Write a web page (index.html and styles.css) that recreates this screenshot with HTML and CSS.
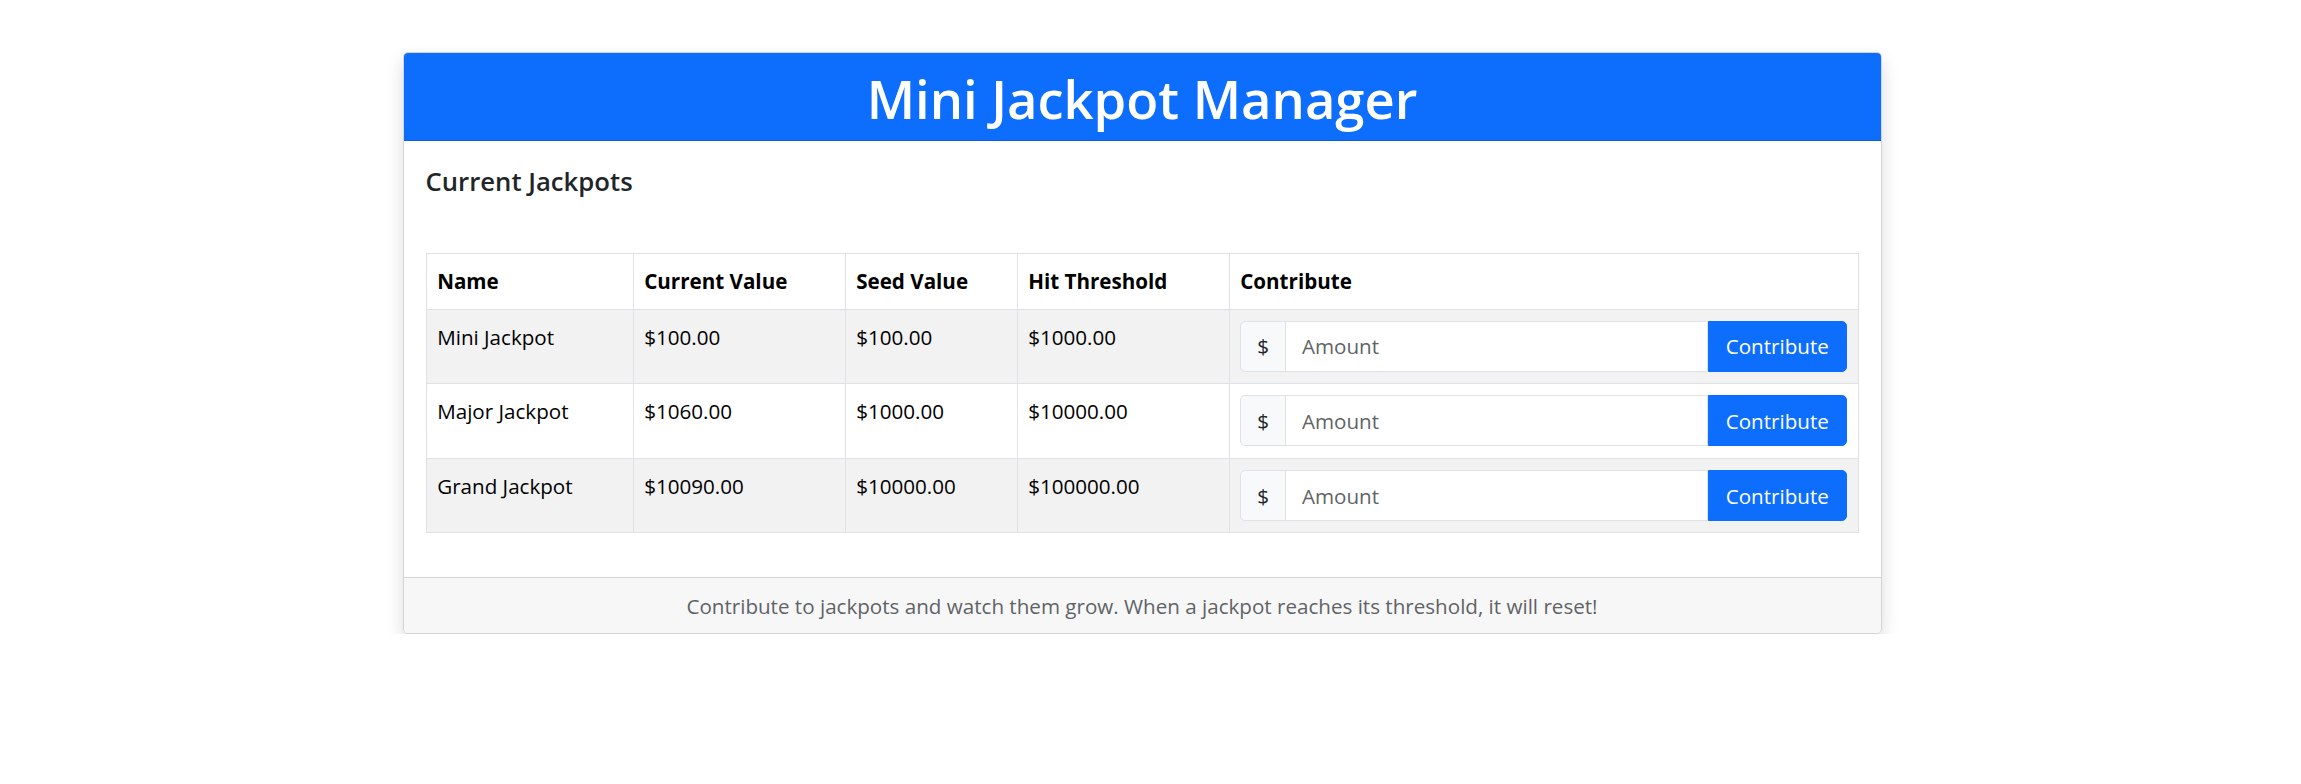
FILE: index.html
```html
<!DOCTYPE html>
<html lang="en">
<head>
<meta charset="utf-8">
<title>Mini Jackpot Manager</title>
<link rel="stylesheet" href="styles.css">
</head>
<body>
<div class="page">
  <div class="card">
    <div class="card-header">
      <h1 class="title">Mini Jackpot Manager</h1>
    </div>
    <div class="card-body">
      <h5 class="section-title">Current Jackpots</h5>
      <table class="jp-table">
        <colgroup>
          <col class="c-name">
          <col class="c-current">
          <col class="c-seed">
          <col class="c-hit">
          <col class="c-contrib">
        </colgroup>
        <thead>
          <tr>
            <th>Name</th>
            <th>Current Value</th>
            <th>Seed Value</th>
            <th>Hit Threshold</th>
            <th>Contribute</th>
          </tr>
        </thead>
        <tbody>
          <tr>
            <td>Mini Jackpot</td>
            <td>$100.00</td>
            <td>$100.00</td>
            <td>$1000.00</td>
            <td>
              <div class="input-group">
                <span class="addon">$</span>
                <input class="amount" type="text" placeholder="Amount">
                <button class="btn" type="button">Contribute</button>
              </div>
            </td>
          </tr>
          <tr>
            <td>Major Jackpot</td>
            <td>$1060.00</td>
            <td>$1000.00</td>
            <td>$10000.00</td>
            <td>
              <div class="input-group">
                <span class="addon">$</span>
                <input class="amount" type="text" placeholder="Amount">
                <button class="btn" type="button">Contribute</button>
              </div>
            </td>
          </tr>
          <tr>
            <td>Grand Jackpot</td>
            <td>$10090.00</td>
            <td>$10000.00</td>
            <td>$100000.00</td>
            <td>
              <div class="input-group">
                <span class="addon">$</span>
                <input class="amount" type="text" placeholder="Amount">
                <button class="btn" type="button">Contribute</button>
              </div>
            </td>
          </tr>
        </tbody>
      </table>
    </div>
    <div class="card-footer">
      Contribute to jackpots and watch them grow. When a jackpot reaches its threshold, it will reset!
    </div>
  </div>
</div>
</body>
</html>
```

FILE: styles.css
```css
html, body {
  margin: 0;
  padding: 0;
  background: #ffffff;
}

body {
  font-family: "Open Sans", "Noto Sans", "Liberation Sans", sans-serif;
  font-size: 20.6px;
  line-height: 32px;
  color: #212529;
}

.page {
  padding: 52px 17px 0 0;
}

.card {
  width: 1479px;
  margin: 0 auto;
  box-sizing: border-box;
  border: 1px solid #d3d4d5;
  border-radius: 5px;
  background: #fff;
  box-shadow: 0 8px 18px rgba(0, 0, 0, 0.14);
  overflow: hidden;
}

.card-header {
  background: #0d6efd;
  color: #fff;
  text-align: center;
  padding: 14px 16px 9px;
  border-bottom: 1px solid #0b5ed7;
}

.title {
  margin: 0;
  font-size: 52.5px;
  line-height: 64px;
  font-weight: 600;
}

.card-body {
  padding: 25px 22px 22px;
}

.section-title {
  margin: 0 0 55px;
  font-size: 25.7px;
  line-height: 32px;
  font-weight: 600;
  color: #212529;
}

.jp-table {
  width: 100%;
  border-collapse: collapse;
  table-layout: fixed;
  margin-bottom: 22px;
  color: #000;
}

.c-name { width: 207px; }
.c-current { width: 212px; }
.c-seed { width: 172px; }
.c-hit { width: 212px; }

.jp-table th,
.jp-table td {
  border: 1px solid #dee2e6;
  padding: 11.3px 10.7px;
  text-align: left;
  vertical-align: top;
}

.jp-table th {
  font-weight: 700;
}

.jp-table tbody tr:nth-child(odd) td {
  background: #f2f2f2;
}

.input-group {
  display: flex;
  height: 51px;
}

.addon {
  display: flex;
  align-items: center;
  box-sizing: border-box;
  padding: 0 16px;
  background: #f8f9fa;
  border: 1px solid #dee2e6;
  border-radius: 5px 0 0 5px;
  color: #212529;
}

.amount {
  flex: 1;
  min-width: 0;
  box-sizing: border-box;
  margin: 0;
  margin-left: -1px;
  padding: 0 16px;
  border: 1px solid #dee2e6;
  background: #fff;
  font-family: inherit;
  font-size: 20.6px;
  color: #212529;
  outline: none;
}

.amount::placeholder {
  color: #5f6366;
}

.btn {
  box-sizing: border-box;
  margin: 0;
  padding: 0 17px;
  border: 1px solid #0d6efd;
  border-radius: 0 5px 5px 0;
  background: #0d6efd;
  color: #fff;
  font-family: inherit;
  font-size: 20.6px;
  line-height: 32px;
}

.card-footer {
  background: #f7f7f8;
  border-top: 1px solid #d3d4d5;
  padding: 11.3px 16px;
  text-align: center;
  color: #5f6366;
}
```
